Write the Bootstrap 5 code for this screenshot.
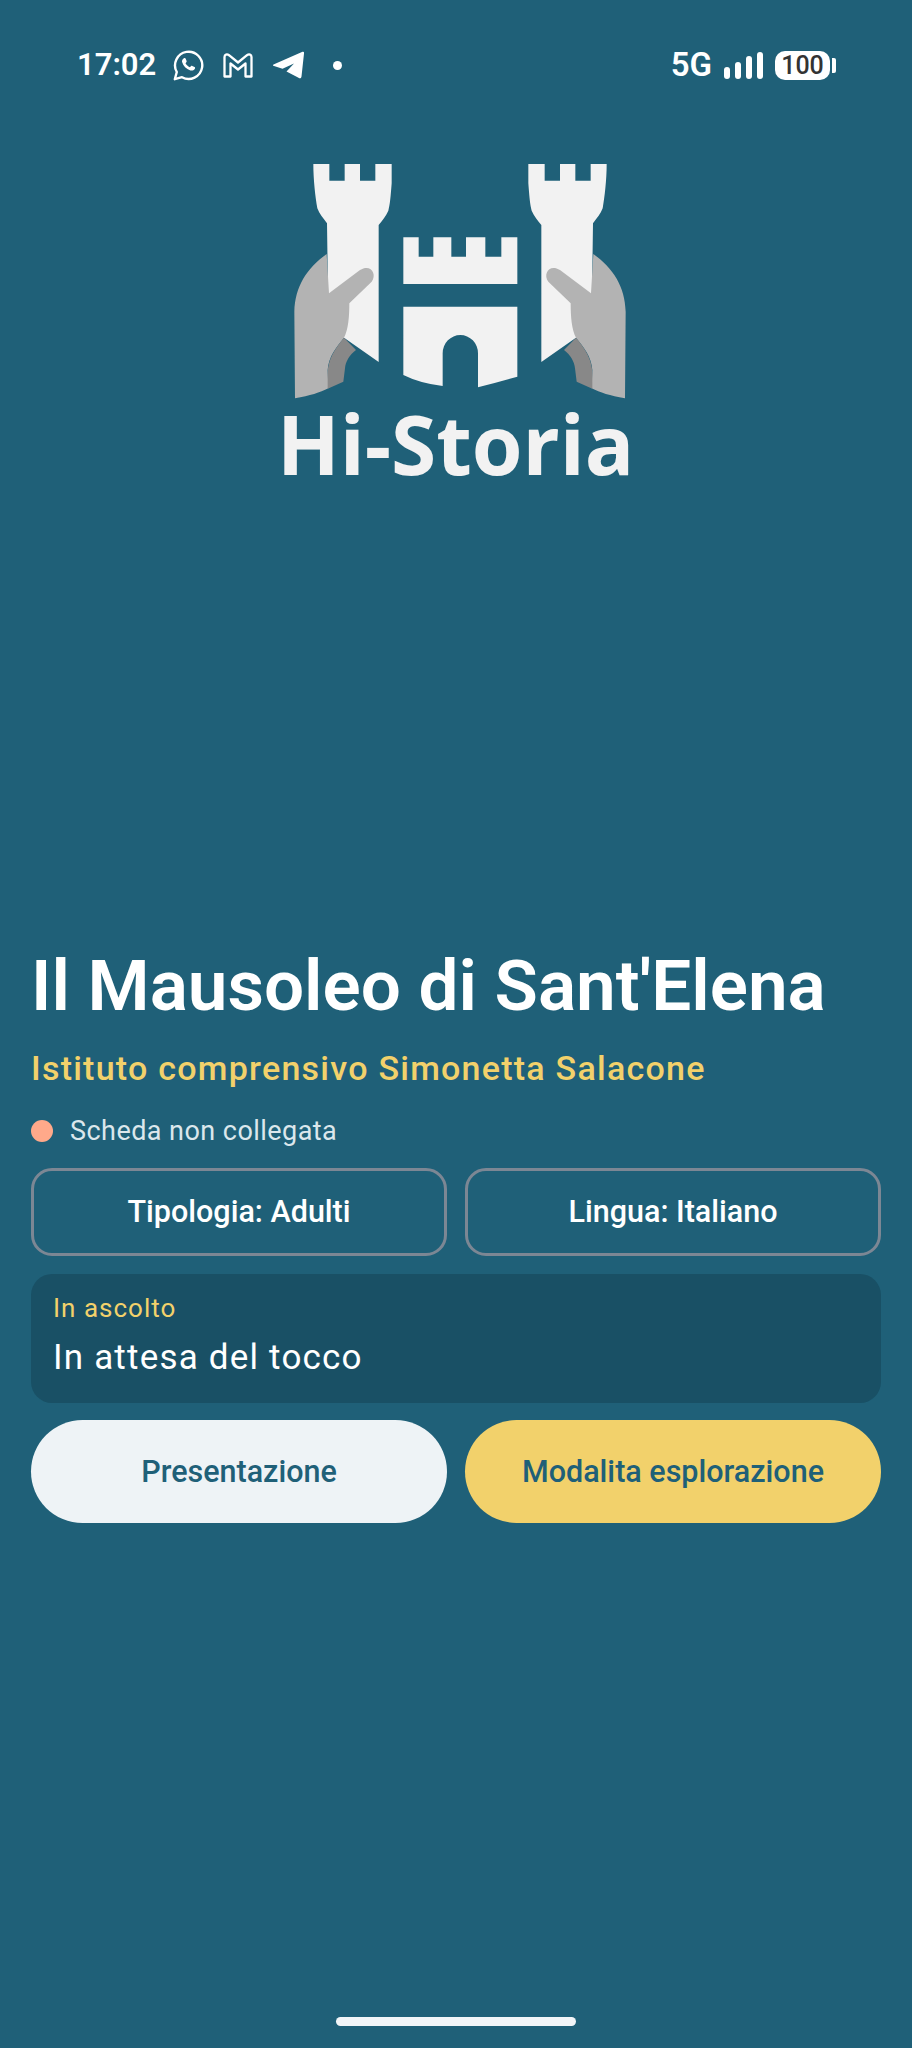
<!DOCTYPE html>
<html lang="it">
  <head>
    <meta charset="UTF-8" />
    <meta name="viewport" content="width=device-width, initial-scale=1.0" />
    <title>Hi-Storia</title>
    <link href="https://cdn.jsdelivr.net/npm/bootstrap@5.3.0/dist/css/bootstrap.min.css" rel="stylesheet" />
    <style>
      body {
        background-color: #1f6078;
        font-family: Roboto, "Liberation Sans", sans-serif;
        height: 2048px;
        overflow: hidden;
      }

      .status-bar {
        height: 30px;
        margin-top: 50px;
        padding: 0 76px 0 77px;
        color: #ffffff;
      }

      .status-time {
        font-size: 31px;
        font-weight: 600;
        line-height: 30px;
        margin-right: 17px;
      }

      .status-net {
        font-size: 33px;
        font-weight: 600;
        line-height: 30px;
        margin-right: 11px;
      }

      .status-signal {
        margin-right: 10px;
      }

      .status-icons {
        gap: 19px;
      }

      .status-dot {
        width: 9px;
        height: 9px;
        margin-left: 28px;
        background-color: #ffffff;
        border-radius: 50%;
      }

      .battery-body {
        width: 55px;
        height: 29px;
        background-color: #ffffff;
        border-radius: 10px;
        color: #333333;
        font-size: 25px;
        font-weight: 500;
        line-height: 29px;
        text-align: center;
      }

      .battery-cap {
        width: 4px;
        height: 15px;
        margin-left: 2px;
        background-color: #ffffff;
        border-radius: 0 2px 2px 0;
      }

      .logo-wrap {
        margin-top: 60px;
      }

      .logo-wrap text {
        font-family: "Open Sans", sans-serif;
        font-weight: 700;
        font-size: 246px;
        fill: #f2f2f2;
      }

      .page-content {
        margin-top: 446px;
        padding: 0 31px;
      }

      .page-title {
        color: #ffffff;
        font-size: 71px;
        font-weight: 600;
        line-height: 80px;
        margin: 0;
      }

      .page-school {
        color: #f2d16b;
        font-size: 34px;
        font-weight: 500;
        line-height: 40px;
        letter-spacing: 1.25px;
        margin-top: 22px;
      }

      .card-status {
        color: #dbe7ec;
        font-size: 27px;
        line-height: 32px;
        letter-spacing: 0.45px;
        gap: 17px;
        margin-top: 27px;
      }

      .card-dot {
        width: 22px;
        height: 22px;
        background-color: #ffa98a;
        border-radius: 50%;
      }

      .two-up {
        grid-template-columns: 1fr 1fr;
        gap: 18px;
      }

      .select-row {
        margin-top: 21px;
      }

      .btn.select-btn {
        height: 88px;
        border: 3px solid #7c8794;
        border-radius: 21px;
        color: #ffffff;
        font-size: 30.500px;
        font-weight: 500;
        padding: 0;
      }

      .listen-panel {
        background-color: #195065;
        border-radius: 21px;
        height: 129px;
        margin: 18px 0 17px;
        padding: 18px 22px;
      }

      .listen-label {
        color: #f2d16b;
        font-size: 26px;
        line-height: 32px;
        letter-spacing: 1px;
      }

      .listen-text {
        color: #ffffff;
        font-size: 35px;
        line-height: 44px;
        letter-spacing: 1.200px;
        margin-top: 12px;
      }

      .btn.action-btn {
        height: 103px;
        border: 0;
        color: #1f6078;
        font-size: 30.500px;
        font-weight: 500;
        padding: 0;
      }

      .btn.action-light {
        background-color: #eef3f6;
      }

      .btn.action-yellow {
        background-color: #f2d16b;
      }

      .home-bar {
        width: 240px;
        height: 9px;
        background-color: #f1f5f8;
        border-radius: 5px;
        margin: auto auto 22px;
      }
    </style>
  </head>
  <body class="d-flex flex-column">
    <!-- Status bar -->
    <div class="status-bar d-flex justify-content-between align-items-center">
      <div class="d-flex align-items-center">
        <span class="status-time">17:02</span>
        <div class="status-icons d-flex align-items-center">
          <!-- whatsapp -->
          <svg width="31" height="31" viewBox="0 0 31 31" fill="none" stroke="#fff">
            <path stroke-width="2.4" stroke-linejoin="round" d="M1.8 29.2 l2-7.2 A13.6 13.6 0 1 1 9 27.2 Z" />
            <path fill="#fff" stroke="none" d="M10.6 8.4 c.7-.7 1.7-.6 2 .2 l1 2.3 c.2.5 0 1-.3 1.4 l-.8 1 c1 1.8 2.400 3.100 4.300 4 l1.100-1.100 c.4-.4.9-.5 1.400-.3 l2.200 1.100 c.7.4.8 1.200.2 2 -1 1.400-2.700 1.900-4.300 1.400 -4.200-1.300-7.200-4.300-8.300-8.300 -.4-1.400.2-2.800 1.500-3.700 Z" />
          </svg>
          <!-- gmail -->
          <svg width="30" height="25" viewBox="0 0 30 25" fill="none" stroke="#fff" stroke-width="2.300" stroke-linejoin="round">
            <path d="M1.500 4 C1.500 1.500 4 .8 6 2.200 L15 9.500 L24 2.200 C26 .8 28.500 1.500 28.500 4 V23.500 H22.500 V10.500 L15 16.500 L7.500 10.500 V23.500 H1.500 Z" />
          </svg>
          <!-- telegram -->
          <svg width="33" height="28" viewBox="0 0 33 28" fill="#fff">
            <path d="M1.500 13.500 L30.500 .8 C31.800 .3 32.300 1 32 2.500 L29.500 25.500 C29.200 27.500 27.800 27.700 26.500 26.800 L14.500 20.500 L22 12.500 L10.500 17.800 L2 15 C.8 14.600 .6 14 1.500 13.500 Z" />
          </svg>
        </div>
        <span class="status-dot"></span>
      </div>
      <div class="d-flex align-items-center">
        <span class="status-net">5G</span>
        <svg class="status-signal" width="42" height="30" viewBox="0 0 42 30" fill="#fff">
          <rect x="1" y="17" width="6" height="12" rx="3" />
          <rect x="12" y="12" width="6" height="17" rx="3" />
          <rect x="23" y="6" width="6" height="23" rx="3" />
          <rect x="34" y="2" width="6" height="27" rx="3" />
        </svg>
        <span class="battery-body">100</span>
        <span class="battery-cap"></span>
      </div>
    </div>

    <!-- Logo -->
    <div class="logo-wrap d-flex justify-content-center">
      <svg width="392" height="360" viewBox="0 0 1176 1080">
        <g>
          <path fill="#f2f2f2" d="M160 72 H208 V122 H254 V72 H300 V122 H346 V72 H395 V130 C392 170 390 195 385 212 C378 228 368 240 356 255 V666 L250 592 L204 460 L201 250 C190 235 178 222 172 205 C166 170 160 120 160 72 Z" />
          <path fill="#b3b3b3" d="M200 342 C140 385 105 440 103 515 L105 775 C150 768 180 757 205 745 L203 690 C205 650 230 620 252 593 C265 570 268 530 268 490 L335 425 C352 402 332 370 300 390 L207 460 Z" />
          <path fill="#888888" d="M252 593 L288 630 C268 645 257 665 255 685 L250 725 L203 746 L203 700 C203 660 225 625 252 593 Z" />
        </g>
        <g transform="matrix(-1 0 0 1 1200 0)">
          <path fill="#f2f2f2" d="M160 72 H208 V122 H254 V72 H300 V122 H346 V72 H395 V130 C392 170 390 195 385 212 C378 228 368 240 356 255 V666 L250 592 L204 460 L201 250 C190 235 178 222 172 205 C166 170 160 120 160 72 Z" />
          <path fill="#b3b3b3" d="M200 342 C140 385 105 440 103 515 L105 775 C150 768 180 757 205 745 L203 690 C205 650 230 620 252 593 C265 570 268 530 268 490 L335 425 C352 402 332 370 300 390 L207 460 Z" />
          <path fill="#888888" d="M252 593 L288 630 C268 645 257 665 255 685 L250 725 L203 746 L203 700 C203 660 225 625 252 593 Z" />
        </g>
        <path fill="#f2f2f2" d="M430 292 H476 V350 H520 V292 H574 V350 H618 V292 H676 V350 H724 V292 H772 V432 H430 Z" />
        <path fill="#f2f2f2" d="M430 500 H772 V710 Q710 728 654 742 V640 A53 55 0 0 0 548 640 V738 Q480 730 430 705 Z" />
        <text x="587" y="1005" text-anchor="middle">Hi-Storia</text>
      </svg>
    </div>

    <!-- Main content -->
    <div class="page-content">
      <h1 class="page-title">Il Mausoleo di Sant'Elena</h1>
      <div class="page-school">Istituto comprensivo Simonetta Salacone</div>
      <div class="card-status d-flex align-items-center">
        <span class="card-dot"></span>
        <span>Scheda non collegata</span>
      </div>
      <div class="two-up select-row d-grid">
        <button class="btn select-btn" type="button">Tipologia: Adulti</button>
        <button class="btn select-btn" type="button">Lingua: Italiano</button>
      </div>
      <div class="listen-panel">
        <div class="listen-label">In ascolto</div>
        <div class="listen-text">In attesa del tocco</div>
      </div>
      <div class="two-up d-grid">
        <button class="btn action-btn action-light rounded-pill" type="button">Presentazione</button>
        <button class="btn action-btn action-yellow rounded-pill" type="button">Modalita esplorazione</button>
      </div>
    </div>

    <div class="home-bar"></div>

    <script src="https://cdn.jsdelivr.net/npm/bootstrap@5.3.0/dist/js/bootstrap.bundle.min.js"></script>
  </body>
</html>
